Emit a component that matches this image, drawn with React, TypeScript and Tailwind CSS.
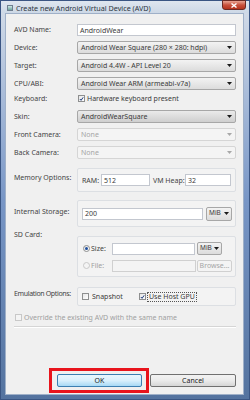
import React from "react";

const F = "font-['Noto_Sans',sans-serif]";

function Arrow({ disabled }: { disabled?: boolean }) {
  return (
    <svg width="5" height="3" viewBox="0 0 5 3" className="shrink-0">
      <path d="M0 0 L5 0 L2.5 3 Z" fill={disabled ? "#a8a8a8" : "#1a1a1a"} />
    </svg>
  );
}

function Select({ text, disabled, className = "" }: { text: string; disabled?: boolean; className?: string }) {
  return (
    <div
      className={`flex items-center justify-between rounded-[2px] border px-[2px] h-[13px] ${
        disabled
          ? "border-[#d5d5d5] bg-[#f4f4f4] text-[#a5a5a5]"
          : "border-[#a7a7a7] bg-gradient-to-b from-[#f3f3f3] to-[#dcdcdc] text-[#3a3a3a]"
      } ${className}`}
    >
      <span className="leading-none whitespace-nowrap">{text}</span>
      <Arrow disabled={disabled} />
    </div>
  );
}

function Input({ text = "", disabled, className = "" }: { text?: string; disabled?: boolean; className?: string }) {
  return (
    <div
      className={`flex items-center border px-[2px] ${
        disabled ? "border-[#d0d0d0] bg-[#f4f4f4]" : "border-[#c3c7cf] bg-white"
      } text-[#3a3a3a] ${className}`}
    >
      <span className="leading-none whitespace-nowrap">{text}</span>
    </div>
  );
}

function Check({ checked, disabled }: { checked?: boolean; disabled?: boolean }) {
  return (
    <div
      className={`w-[7px] h-[7px] border shrink-0 flex items-center justify-center ${
        disabled ? "border-[#c8c8c8] bg-[#f4f4f4]" : "border-[#8e8f8f] bg-gradient-to-br from-[#e6e6e6] to-white"
      }`}
    >
      {checked && (
        <svg width="6" height="6" viewBox="0 0 6 6">
          <path d="M1 3 L2.5 4.6 L5 1" stroke="#1d3a7a" strokeWidth="1.2" fill="none" />
        </svg>
      )}
    </div>
  );
}

function Radio({ checked, disabled }: { checked?: boolean; disabled?: boolean }) {
  return (
    <div
      className={`w-[7px] h-[7px] rounded-full border shrink-0 flex items-center justify-center ${
        disabled ? "border-[#c8c8c8] bg-[#f4f4f4]" : "border-[#8e8f8f] bg-gradient-to-br from-[#e6e6e6] to-white"
      }`}
    >
      {checked && <div className="w-[3px] h-[3px] rounded-full bg-[#1f4f9e]" />}
    </div>
  );
}

function Label({ children, className = "" }: { children: React.ReactNode; className?: string }) {
  return <div className={`w-[63px] shrink-0 leading-[10px] text-[#444] whitespace-nowrap ${className}`}>{children}</div>;
}

function Box({ children, className = "" }: { children: React.ReactNode; className?: string }) {
  return <div className={`w-[159px] rounded-[2px] border border-[#dcdfe3] bg-[#f3f3f3] ${className}`}>{children}</div>;
}

export default function App() {
  return (
    <div className={`${F} text-[7px] w-[250px] h-[400px] flex flex-col border border-[#3a5583] bg-gradient-to-b from-[#d6dee9] via-[#7896c6] to-[#54739f]`}>
      {/* Title bar */}
      <div className="h-[12px] flex items-start relative bg-gradient-to-b from-[#dfe6ef] to-[#cdd8e6]">
        <div className="ml-[6px] mt-[4px] w-[6px] h-[6px] border border-[#6f7f8f] bg-gradient-to-b from-[#cfe9e6] to-[#6ea59e]" />
        <div className="ml-[3px] mt-[2px] text-[7.2px] leading-[10px] text-[#2b3440] whitespace-nowrap">
          Create new Android Virtual Device (AVD)
        </div>
        <div className="absolute right-[3px] top-[-1px] w-[24px] h-[10px] rounded-b-[3px] border border-[#6a2a23] bg-gradient-to-b from-[#e8a493] via-[#c8503b] to-[#b5331c] flex items-center justify-center">
          <svg width="6" height="5" viewBox="0 0 6 5">
            <path d="M0.5 0.5 L5.5 4.5 M5.5 0.5 L0.5 4.5" stroke="white" strokeWidth="1.4" />
          </svg>
        </div>
      </div>

      {/* Content */}
      <div className="ml-[4px] mr-[5px] mb-[4px] flex-1 border border-[#9fb0c8] bg-[#f0f0f0] flex flex-col pl-[8px] pr-[7px]">
        <div className="flex items-center mt-[10px] h-[12px]">
          <Label>AVD Name:</Label>
          <Input text="AndroidWear" className="w-[159px] h-[12px]" />
        </div>
        <div className="flex items-center mt-[5px] h-[13px]">
          <Label>Device:</Label>
          <Select text="Android Wear Square (280 × 280: hdpi)" className="w-[159px] px-[3px]" />
        </div>
        <div className="flex items-center mt-[5px] h-[13px]">
          <Label>Target:</Label>
          <Select text="Android 4.4W - API Level 20" className="w-[159px] px-[3px]" />
        </div>
        <div className="flex items-center mt-[5px] h-[13px]">
          <Label>CPU/ABI:</Label>
          <Select text="Android Wear ARM (armeabi-v7a)" className="w-[159px] px-[3px]" />
        </div>
        <div className="flex items-center mt-[3px] h-[11px]">
          <Label>Keyboard:</Label>
          <div className="flex items-center gap-[2px] ml-[1px]">
            <Check checked />
            <span className="leading-none text-[#3a3a3a]">Hardware keyboard present</span>
          </div>
        </div>
        <div className="flex items-center mt-[6px] h-[13px]">
          <Label>Skin:</Label>
          <Select text="AndroidWearSquare" className="w-[159px] px-[3px] !from-[#eaeaea] !to-[#cfcfcf]" />
        </div>
        <div className="flex items-center mt-[5px] h-[13px]">
          <Label>Front Camera:</Label>
          <Select text="None" disabled className="w-[159px] px-[3px]" />
        </div>
        <div className="flex items-center mt-[5px] h-[13px]">
          <Label>Back Camera:</Label>
          <Select text="None" disabled className="w-[159px] px-[3px]" />
        </div>

        <div className="flex items-start mt-[9px]">
          <Label className="mt-[5px]">Memory Options:</Label>
          <Box className="h-[24px] flex items-center pl-[4px]">
            <span className="w-[19px] leading-none text-[#444]">RAM:</span>
            <Input text="512" className="w-[49px] h-[12px]" />
            <span className="ml-[3px] w-[32px] leading-none text-[#444]">VM Heap:</span>
            <Input text="32" className="w-[46px] h-[12px]" />
          </Box>
        </div>

        <div className="flex items-start mt-[8px]">
          <Label className="mt-[7px]">Internal Storage:</Label>
          <Box className="h-[27px] flex items-center pl-[4px]">
            <Input text="200" className="w-[121px] h-[12px]" />
            <Select text="MiB" className="ml-[3px] w-[26px] h-[14px] text-[6.5px]" />
          </Box>
        </div>

        <div className="flex items-start mt-[9px]">
          <Label className="-mt-[6px]">SD Card:</Label>
          <Box className="h-[41px] flex flex-col pl-[5px] pt-[5px]">
            <div className="flex items-center h-[13px]">
              <Radio checked />
              <span className="ml-[1px] w-[21px] leading-none text-[#444]">Size:</span>
              <Input className="w-[83px] h-[12px]" />
              <Select text="MiB" className="ml-[2px] w-[25px] h-[13px] text-[6.5px]" />
            </div>
            <div className="flex items-center h-[13px] mt-[4px]">
              <Radio disabled />
              <span className="ml-[1px] w-[21px] leading-none text-[#a0a0a0]">File:</span>
              <Input disabled className="w-[84px] h-[12px]" />
              <div className="ml-[1px] w-[35px] h-[12px] rounded-[2px] border border-[#d0d0d0] bg-[#f4f4f4] flex items-center justify-center text-[#a5a5a5] leading-none">
                Browse...
              </div>
            </div>
          </Box>
        </div>

        <div className="flex items-start mt-[10px]">
          <Label className="mt-[2px] tracking-[-0.35px]">Emulation Options:</Label>
          <Box className="h-[19px] flex items-center pl-[4px]">
            <Check />
            <span className="ml-[3px] w-[47px] leading-none text-[#3a3a3a]">Snapshot</span>
            <Check checked />
            <span className="ml-[1px] px-[1px] border border-dotted border-[#555] leading-[8px] text-[#3a3a3a]">Use Host GPU</span>
          </Box>
        </div>

        <div className="flex items-center mt-[6px] h-[10px] ml-[1px]">
          <Check disabled />
          <span className="ml-[2px] leading-none text-[#a0a0a0]">Override the existing AVD with the same name</span>
        </div>

        <div className="mt-[4px] h-[1px] bg-[#d5d5d5] border-b border-white box-content" />

        <div className="flex items-start mt-[40px] ml-[35px]">
          <div className="border-[3px] border-[#e8141c] pl-[5px] pr-[4px] py-[3px]">
            <div className="w-[85px] h-[13px] rounded-[2px] border border-[#3c7fb1] bg-gradient-to-b from-[#eaf6fd] via-[#d9f0fc] to-[#a7d9f5] flex items-center justify-center text-[#1a1a1a] leading-none">
              OK
            </div>
          </div>
          <div className="ml-[1px] mt-[6px] w-[86px] h-[13px] rounded-[2px] border border-[#707070] bg-gradient-to-b from-[#f2f2f2] via-[#ebebeb] to-[#d6d6d6] flex items-center justify-center text-[#1a1a1a] leading-none">
            Cancel
          </div>
        </div>
      </div>
    </div>
  );
}
